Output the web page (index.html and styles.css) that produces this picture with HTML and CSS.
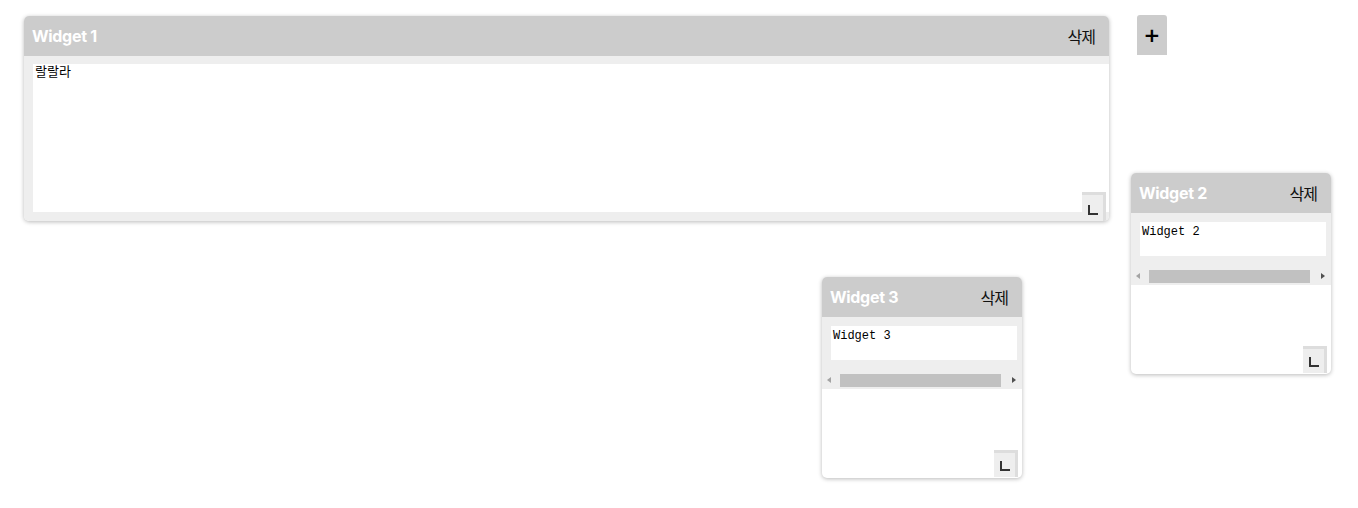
FILE: index.html
```html
<!DOCTYPE html>
<html lang="ko">
<head>
<meta charset="utf-8">
<title>Widgets</title>
<link rel="stylesheet" href="styles.css">
</head>
<body>
<div class="canvas">
  <div class="widget w1">
    <div class="w-head"><span class="w-title">Widget 1</span><button class="w-del">삭제</button></div>
    <div class="w-body big">
      <div class="ta ta-big">랄랄라</div>
    </div>
    <div class="handle"><span class="ell"></span></div>
  </div>

  <button class="add">+</button>

  <div class="widget small w2">
    <div class="w-head"><span class="w-title">Widget 2</span><button class="w-del">삭제</button></div>
    <div class="w-body">
      <div class="ta">Widget 2</div>
      <div class="hscroll"><span class="arr arr-l"></span><span class="thumb"></span><span class="arr arr-r"></span></div>
    </div>
    <div class="handle"><span class="ell"></span></div>
  </div>

  <div class="widget small w3">
    <div class="w-head"><span class="w-title">Widget 3</span><button class="w-del">삭제</button></div>
    <div class="w-body">
      <div class="ta">Widget 3</div>
      <div class="hscroll"><span class="arr arr-l"></span><span class="thumb"></span><span class="arr arr-r"></span></div>
    </div>
    <div class="handle"><span class="ell"></span></div>
  </div>
</div>
</body>
</html>
```
FILE: styles.css
```css
html, body {
  margin: 0;
  padding: 0;
  background: #fff;
}
body {
  font-family: Inter, Roboto, "Noto Sans CJK KR", sans-serif;
}
.canvas {
  position: relative;
  width: 1358px;
  height: 508px;
}
.widget {
  position: absolute;
  background: #fff;
  border-radius: 5px;
  overflow: hidden;
  box-shadow: 0 1px 4px rgba(0,0,0,0.28);
  display: flex;
  flex-direction: column;
}
.w1 { left: 24px; top: 16px; width: 1085px; height: 205px; }
.w2 { left: 1131px; top: 173px; width: 200px; height: 201px; }
.w3 { left: 822px; top: 277px; width: 200px; height: 201px; }

.w-head {
  height: 40px;
  flex: 0 0 40px;
  background: #ccc;
  display: flex;
  align-items: center;
  justify-content: space-between;
  padding: 0 14px 0 8px;
}
.w-title {
  color: #fff;
  font-weight: 700;
  font-size: 16px;
  letter-spacing: -0.3px;
}
.w-del {
  border: none;
  background: transparent;
  padding: 0;
  color: #111;
  font-family: "Noto Sans CJK KR", sans-serif;
  font-size: 16px;
  line-height: 20px;
  letter-spacing: -1px;
}
.w-body {
  background: #eee;
  height: 72px;
  flex: 0 0 72px;
  box-sizing: border-box;
  border-bottom: 1px solid #d6d6d6;
  padding: 9px 5px 0 9px;
  display: flex;
  flex-direction: column;
}
.w-body.big {
  height: 165px;
  flex: 0 0 165px;
  border-bottom: none;
  padding: 8px 0 9px 9px;
}
.ta {
  background: #fff;
  height: 34px;
  flex: 0 0 34px;
  box-sizing: border-box;
  padding: 3px 2px;
  font-family: "Liberation Mono", "Noto Sans CJK KR", monospace;
  font-size: 12px;
  line-height: 14px;
  color: #000;
}
.ta-big {
  height: 148px;
  flex: 1 1 auto;
  font-size: 13px;
  padding: 2px 2px;
}
.hscroll {
  margin: 13px -5px 0 -9px;
  height: 16px;
  flex: 0 0 16px;
  display: flex;
  align-items: flex-start;
  background: #eee;
}
.arr {
  width: 0;
  height: 0;
  border-top: 3.5px solid transparent;
  border-bottom: 3.5px solid transparent;
  margin-top: 4px;
}
.arr-l {
  border-right: 4px solid #a3a3a3;
  margin-left: 5px;
  margin-right: 9px;
}
.arr-r {
  border-left: 4px solid #505050;
  margin-left: 11px;
}
.thumb {
  width: 161px;
  height: 13px;
  margin-top: 1px;
  background: #c1c1c1;
}
.handle {
  position: absolute;
  right: 4px;
  bottom: 1px;
  width: 24px;
  height: 27px;
  box-sizing: border-box;
  background: #eee;
  border-top: 3px solid #ddd;
  border-right: 3px solid #ddd;
}
.w1 .handle {
  right: 3px;
  bottom: 0;
  height: 29px;
}
.ell {
  position: absolute;
  left: 6px;
  top: 8px;
  width: 8px;
  height: 8px;
  border-left: 2px solid #333;
  border-bottom: 2px solid #333;
}
.w1 .ell { top: 10px; }
.add {
  position: absolute;
  left: 1137px;
  top: 15px;
  width: 30px;
  height: 40px;
  border: none;
  border-radius: 3px 3px 0 0;
  background: #ccc;
  color: #000;
  font-family: "DejaVu Sans", sans-serif;
  font-size: 20px;
  font-weight: 700;
  padding: 0;
  line-height: 40px;
}
```
